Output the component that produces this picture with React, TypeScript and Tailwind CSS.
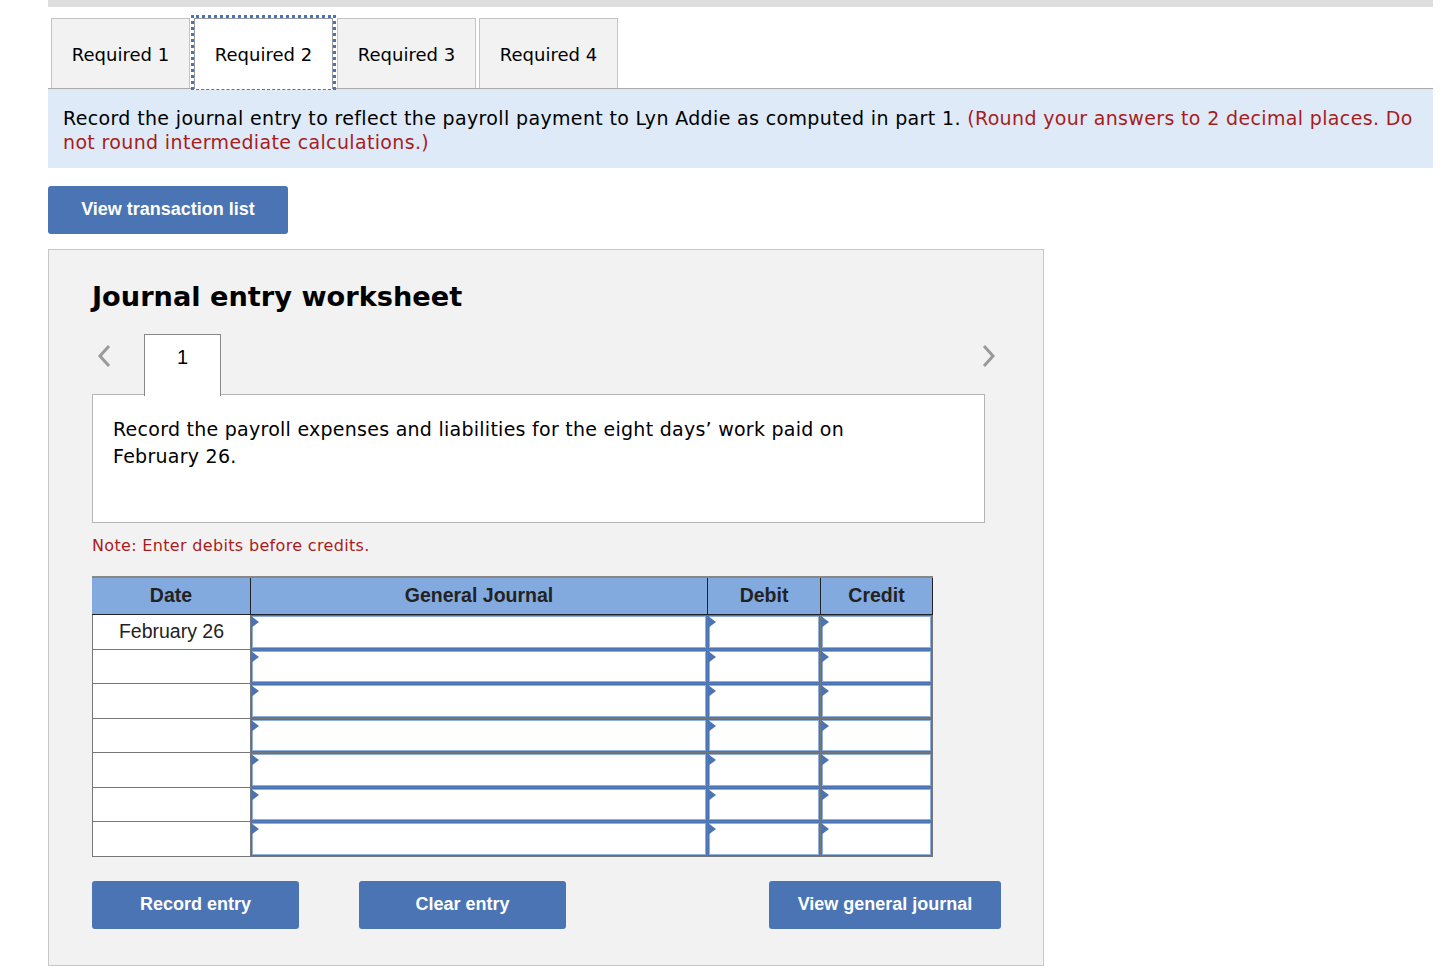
import React from 'react';

const verdana = 'font-["DejaVu_Sans",sans-serif]';
const arial = 'font-["Liberation_Sans",Arial,sans-serif]';

const tabs = ['Required 1', 'Required 2', 'Required 3', 'Required 4'];
const rowDates = ['February 26', '', '', '', '', '', ''];

const EntryCell: React.FC<{ width: string; last?: boolean }> = ({ width, last }) => (
  <div className={`relative h-full shrink-0 border-l border-[#777] bg-[#4a74b4] p-px ${last ? 'border-r' : ''} ${width}`}>
    <div className="h-full border border-[#8fb0df] bg-white" />
    <span className="absolute left-0 top-[1px] h-0 w-0 border-y-[6px] border-l-[8px] border-y-transparent border-l-[#4a74b4]" />
  </div>
);

const BlueButton: React.FC<{ label: string; width: string }> = ({ label, width }) => (
  <button className={`h-12 rounded-[3px] bg-[#4a74b4] pb-[2px] text-lg font-bold text-white ${arial} ${width}`}>
    {label}
  </button>
);

const Chevron: React.FC<{ points: string; className: string }> = ({ points, className }) => (
  <svg width="14" height="24" viewBox="0 0 14 24" fill="none" className={`shrink-0 ${className}`}>
    <polyline points={points} stroke="#999" strokeWidth="3" />
  </svg>
);

export default function App() {
  return (
    <div className={`h-[970px] w-[1450px] overflow-hidden bg-white text-black ${verdana}`}>
      <div className="ml-12 w-[1385px]">
        <div className="h-[7px] bg-[#dedede]" />

        <div className="flex h-[82px] items-end gap-[3px] border-b border-[#aaa] pl-[3px]">
          {tabs.map((tab, i) => (
            <div
              key={tab}
              className={
                i === 1
                  ? 'relative z-10 -mx-[2px] -mb-[2px] h-[75px] w-[145px] border-x-[3px] border-t-[3px] border-b border-x-[#4a74b4] border-t-[#4a74b4] border-b-[#4a74b4] border-dotted [border-bottom-style:dashed] bg-white text-lg'
                  : 'flex h-[70px] w-[139px] items-center justify-center border border-b-0 border-[#c4c4c4] bg-[#f2f2f2] pt-[2px] text-lg'
              }
            >
              {i === 1 ? (
                <div className="flex h-full items-center justify-center border-x border-t border-[#999] pt-[1px]">{tab}</div>
              ) : (
                tab
              )}
            </div>
          ))}
        </div>

        <div className="h-[79px] bg-[#deeaf8] px-[15px] pt-[17px] text-[19px] leading-6 tracking-[0.35px]">
          Record the journal entry to reflect the payroll payment to Lyn Addie as computed in part 1.{' '}
          <span className="text-[#a81c1c]">
            (Round your answers to 2 decimal places. Do not round intermediate calculations.)
          </span>
        </div>

        <button className={`mt-[18px] block h-12 w-60 rounded-[3px] bg-[#4a74b4] pb-[2px] text-lg font-bold text-white ${arial}`}>
          View transaction list
        </button>

        <div className="mt-[15px] h-[717px] w-[996px] border border-[#c8c8c8] bg-[#f2f2f2] pl-[43px] pt-[30px]">
          <h2 className="text-[27.2px] font-bold leading-[34px]">Journal entry worksheet</h2>

          <div className="mt-[20px] flex h-[60px] w-[893px] items-start">
            <Chevron points="12,2 3,12 12,22" className="ml-[5px] mt-[10px]" />
            <div className={`relative z-10 ml-[33px] h-[62px] w-[77px] border border-b-0 border-[#888] bg-white pt-[8px] text-center text-xl ${arial}`}>
              1
            </div>
            <Chevron points="2,2 11,12 2,22" className="ml-auto mr-[-11px] mt-[10px]" />
          </div>

          <div className="h-[129px] w-[893px] border border-[#b5b5b5] bg-white px-5 pt-[21px] text-[19px] leading-[27px] tracking-[0.26px]">
            Record the payroll expenses and liabilities for the eight days’ work paid on
            <br />
            February 26.
          </div>

          <p className="mt-[13px] text-base leading-5 tracking-[0.33px] text-[#a81c1c]">Note: Enter debits before credits.</p>

          <div className={`mt-[20px] w-[841px] text-[#222] ${arial}`}>
            <div className="flex h-[39px] border-t-2 border-[#888] border-b border-b-[#222] bg-[#82aadf] text-[19.5px] font-bold">
              <div className="flex w-[158px] shrink-0 items-center justify-center">Date</div>
              <div className="flex w-[457px] shrink-0 items-center justify-center border-l border-[#222]">General Journal</div>
              <div className="flex w-[113px] shrink-0 items-center justify-center border-l border-[#222]">Debit</div>
              <div className="flex w-[113px] shrink-0 items-center justify-center border-x border-[#222]">Credit</div>
            </div>
            {rowDates.map((date, i) => (
              <div key={i} className="flex h-[34.5px] border-b border-[#777] bg-white">
                <div className="flex w-[158px] shrink-0 items-center justify-center border-l border-[#777] text-[19.5px]">{date}</div>
                <EntryCell width="w-[457px]" />
                <EntryCell width="w-[113px]" />
                <EntryCell width="w-[113px]" last />
              </div>
            ))}
          </div>

          <div className="mt-[24px] flex w-[909px]">
            <BlueButton label="Record entry" width="w-[207px]" />
            <BlueButton label="Clear entry" width="ml-[60px] w-[207px]" />
            <BlueButton label="View general journal" width="ml-auto w-[232px]" />
          </div>
        </div>
      </div>
    </div>
  );
}
